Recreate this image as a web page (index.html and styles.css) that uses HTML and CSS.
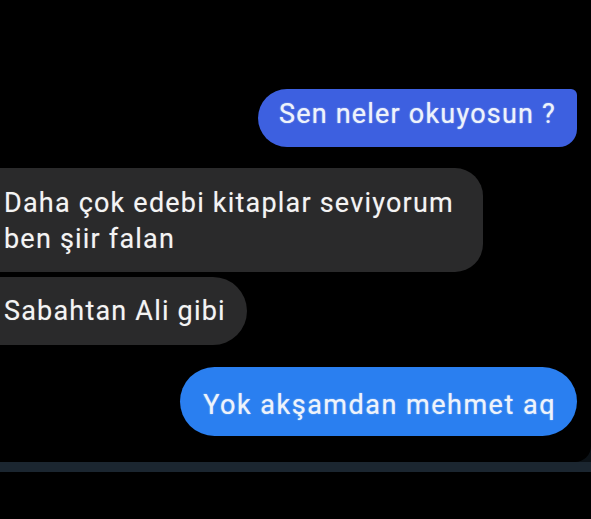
FILE: index.html
```html
<!DOCTYPE html>
<html lang="tr">
<head>
<meta charset="utf-8">
<link rel="stylesheet" href="styles.css">
</head>
<body>
<div class="screen">
  <div class="chat">
    <div class="msg out out-first">Sen neler okuyosun ?</div>
    <div class="msg in in-first">Daha çok edebi kitaplar seviyorum<br>ben şiir falan</div>
    <div class="msg in in-last">Sabahtan Ali gibi</div>
    <div class="msg out out-second">Yok akşamdan mehmet aq</div>
  </div>
</div>
<div class="strip"></div>
</body>
</html>
```

FILE: styles.css
```css
html, body {
  margin: 0;
  padding: 0;
  background: #000;
  height: 100%;
  overflow: hidden;
}

body {
  font-family: Roboto, "Noto Sans", sans-serif;
  color: #f2f2f2;
}

.screen {
  background: #0b1116;
}

.chat {
  background: #000;
  height: 462px;
  box-sizing: border-box;
  padding: 89px 14px 0 0;
  border-bottom-right-radius: 16px;
  display: flex;
  flex-direction: column;
  align-items: flex-start;
  overflow: hidden;
}

.msg {
  font-size: 27px;
  letter-spacing: 1.2px;
  white-space: nowrap;
}

.out {
  align-self: flex-end;
  color: #eef3fb;
  text-shadow: 0 0 1px rgba(255,255,255,0.5), 0 0 2px rgba(200,230,255,0.35);
}

.out-first {
  background: #3d60e0;
  line-height: 36px;
  padding: 7px 21px 15px 21px;
  border-radius: 29px 6px 18px 29px;
}

.out-second {
  background: #2a7ff0;
  line-height: 36px;
  padding: 20px 21px 13px 23px;
  border-radius: 35px;
  margin-top: 22px;
  letter-spacing: 1.5px;
}

.in {
  background: #2a2a2b;
  margin-left: -14px;
  color: #f4f4f4;
  text-shadow: 0 0 1px rgba(255,255,255,0.35);
}

.in-first {
  margin-top: 21px;
  line-height: 36px;
  padding: 17px 29px 15px 18px;
  border-radius: 6px 28px 28px 6px;
}

.in-last {
  margin-top: 5px;
  line-height: 36px;
  padding: 16px 21px 16px 18px;
  border-radius: 6px 34px 34px 6px;
}

.strip {
  height: 10px;
  background: #1b2630;
}
```
